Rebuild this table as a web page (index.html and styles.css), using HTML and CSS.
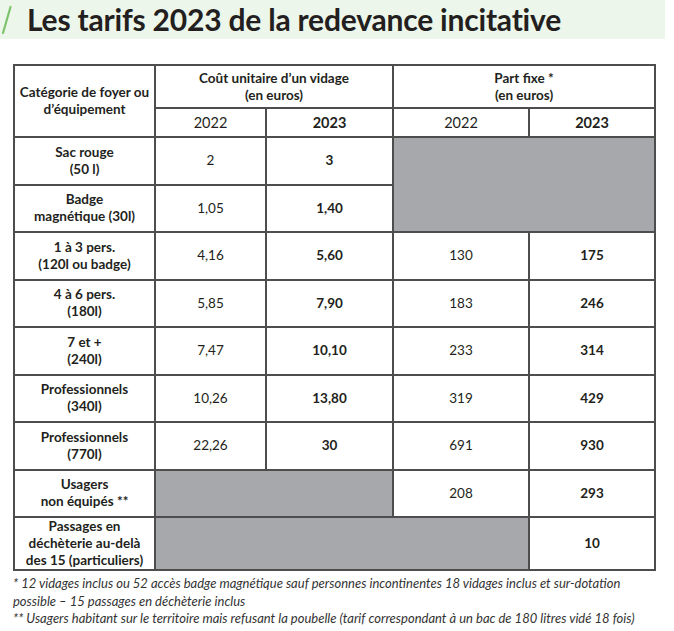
FILE: index.html
```html
<!DOCTYPE html>
<html lang="fr">
<head>
<meta charset="utf-8">
<title>Les tarifs 2023 de la redevance incitative</title>
<link rel="stylesheet" href="styles.css">
</head>
<body>
<header class="banner">
  <svg class="slash" width="14" height="30" viewBox="0 0 14 30"><line x1="10.5" y1="2" x2="3" y2="28" stroke="#7cc36c" stroke-width="2.2" stroke-linecap="round"/></svg>
  <h1 class="title">Les tarifs 2023 de la redevance incitative</h1>
</header>
<main class="content">
  <table class="tarifs">
    <colgroup>
      <col class="c-cat"><col class="c-a"><col class="c-b"><col class="c-c"><col class="c-d">
    </colgroup>
    <thead>
      <tr class="h1">
        <th rowspan="2" class="cat">Catégorie de foyer ou<br>d’équipement</th>
        <th colspan="2">Coût unitaire d’un vidage<br>(en euros)</th>
        <th colspan="2">Part fixe *<br>(en euros)</th>
      </tr>
      <tr class="h2">
        <th class="year reg">2022</th><th class="year">2023</th>
        <th class="year reg">2022</th><th class="year">2023</th>
      </tr>
    </thead>
    <tbody>
      <tr><th class="cat">Sac rouge<br>(50 l)</th><td>2</td><td class="b">3</td><td class="grey" colspan="2" rowspan="2"></td></tr>
      <tr><th class="cat">Badge<br>magnétique (30l)</th><td>1,05</td><td class="b">1,40</td></tr>
      <tr><th class="cat">1 à 3 pers.<br>(120l ou badge)</th><td>4,16</td><td class="b">5,60</td><td>130</td><td class="b">175</td></tr>
      <tr><th class="cat">4 à 6 pers.<br>(180l)</th><td>5,85</td><td class="b">7,90</td><td>183</td><td class="b">246</td></tr>
      <tr><th class="cat">7 et +<br>(240l)</th><td>7,47</td><td class="b">10,10</td><td>233</td><td class="b">314</td></tr>
      <tr><th class="cat">Professionnels<br>(340l)</th><td>10,26</td><td class="b">13,80</td><td>319</td><td class="b">429</td></tr>
      <tr><th class="cat">Professionnels<br>(770l)</th><td>22,26</td><td class="b">30</td><td>691</td><td class="b">930</td></tr>
      <tr><th class="cat">Usagers<br>non équipés **</th><td class="grey" colspan="2"></td><td>208</td><td class="b">293</td></tr>
      <tr class="tall"><th class="cat">Passages en<br>déchèterie au-delà<br>des 15 (particuliers)</th><td class="grey" colspan="3"></td><td class="b">10</td></tr>
    </tbody>
  </table>
  <div class="notes">
    <p>* 12 vidages inclus ou 52 accès badge magnétique sauf personnes incontinentes 18 vidages inclus et sur-dotation<br>possible – 15 passages en déchèterie inclus</p>
    <p>** Usagers habitant sur le territoire mais refusant la poubelle (tarif correspondant à un bac de 180 litres vidé 18 fois)</p>
  </div>
</main>
</body>
</html>
```

FILE: styles.css
```css
html, body {
  margin: 0;
  padding: 0;
  background: #ffffff;
}
body {
  font-family: Lato, "Open Sans", sans-serif;
  color: #231f20;
  width: 674px;
}
.banner {
  display: flex;
  align-items: center;
  width: 665px;
  height: 39px;
  background: #edf6ea;
  box-sizing: border-box;
  padding-left: 0;
}
.slash {
  display: block;
  margin-left: 0;
  margin-right: 13px;
  flex: none;
}
.title {
  margin: 0;
  font-size: 30px;
  font-weight: 700;
  line-height: 39px;
  color: #231f20;
  letter-spacing: -0.2px;
}
.content {
  padding: 25px 0 0 13px;
}
.tarifs {
  border-collapse: collapse;
  table-layout: fixed;
  width: 643px;
  border: 2px solid #4d4d4d;
}
.c-cat { width: 141px; }
.c-a { width: 111px; }
.c-b { width: 127px; }
.c-c { width: 136px; }
.c-d { width: 126px; }
.tarifs th, .tarifs td {
  border: 2px solid #4d4d4d;
  text-align: center;
  vertical-align: middle;
  padding: 0 2px;
  font-size: 13.5px;
  line-height: 17px;
}
.tarifs th {
  font-weight: 700;
}
.tarifs td {
  font-weight: 400;
}
.h1 th {
  height: 41px;
}
.h2 th {
  height: 27px;
}
.tarifs .year {
  font-size: 14.5px;
  font-weight: 700;
}
.tarifs .year.reg {
  font-weight: 400;
}
.tarifs .b {
  font-weight: 700;
}
.tarifs tbody tr {
  height: 47.5px;
}
.tarifs tbody tr.tall {
  height: 51px;
}
.tarifs .grey {
  background: #a7a8ab;
}
.notes {
  margin-top: 4px;
  font-size: 13px;
  font-style: italic;
  line-height: 17.5px;
  color: #333333;
}
.notes p {
  margin: 0;
}
```
